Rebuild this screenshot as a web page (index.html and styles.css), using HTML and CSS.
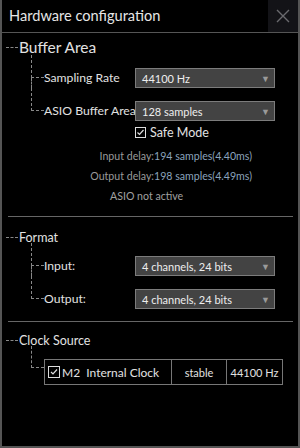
FILE: index.html
```html
<!DOCTYPE html>
<html lang="en">
<head>
    <meta charset="UTF-8">
    <title>Hardware configuration</title>
    <link rel="stylesheet" href="styles.css">
</head>
<body>
    <div class="window">
        <div class="titlebar">
            <span class="title">Hardware configuration</span>
            <span class="close">
                <svg width="14" height="14" viewBox="0 0 14 14"><path d="M1 1L13 13M13 1L1 13" stroke="#6a6a6e" stroke-width="1.4"/></svg>
            </span>
        </div>

        <div class="section first">
            <div class="head big"><span class="dash"></span>Buffer Area</div>
            <div class="tree">
                <div class="branch">
                    <span class="wire"></span>
                    <span class="label">Sampling Rate</span>
                    <div class="select">44100 Hz<span class="arrow">&#9660;</span></div>
                </div>
                <div class="branch">
                    <span class="wire"></span>
                    <span class="label">ASIO Buffer Area</span>
                    <div class="select">128 samples<span class="arrow">&#9660;</span></div>
                </div>
            </div>
            <div class="safe">
                <span class="check"><svg width="11" height="11" viewBox="0 0 11 11"><rect x="0.5" y="0.5" width="10" height="10" fill="none" stroke="#ddd"/><path d="M2.5 5.5L4.5 7.5L8.5 3" fill="none" stroke="#ddd" stroke-width="1.2"/></svg></span>
                Safe Mode
            </div>
            <div class="info">
                <div class="delay"><span class="key">Input delay:</span><span class="val">194 samples(4.40ms)</span></div>
                <div class="delay"><span class="key">Output delay:</span><span class="val">198 samples(4.49ms)</span></div>
                <div class="status">ASIO not active</div>
            </div>
        </div>

        <div class="section format">
            <div class="head"><span class="dash"></span>Format</div>
            <div class="tree">
                <div class="branch">
                    <span class="wire"></span>
                    <span class="label">Input:</span>
                    <div class="select">4 channels, 24 bits<span class="arrow">&#9660;</span></div>
                </div>
                <div class="branch">
                    <span class="wire"></span>
                    <span class="label">Output:</span>
                    <div class="select">4 channels, 24 bits<span class="arrow">&#9660;</span></div>
                </div>
            </div>
        </div>

        <div class="section last">
            <div class="head"><span class="dash"></span>Clock Source</div>
            <div class="tree">
                <div class="branch clock">
                    <span class="wire"></span>
                    <table class="clocks">
                        <tr>
                            <td class="name"><svg width="12" height="12" viewBox="0 0 12 12"><rect x="0.5" y="0.5" width="11" height="11" fill="none" stroke="#ddd"/><path d="M3 6L5 8L9 3.5" fill="none" stroke="#ddd" stroke-width="1.2"/></svg>M2&nbsp; Internal Clock</td>
                            <td class="state">stable</td>
                            <td class="rate">44100 Hz</td>
                        </tr>
                    </table>
                </div>
            </div>
        </div>
    </div>
</body>
</html>
```

FILE: styles.css
```css
body {
    margin: 0;
    background-color: #000;
    font-family: Lato, "Noto Sans", sans-serif;
    color: #e2e2e2;
}
.window {
    width: 300px;
    height: 448px;
    box-sizing: border-box;
    border: 2px solid #555;
    border-top: none;
    background-color: #000;
}
.titlebar {
    display: flex;
    height: 32px;
    border-bottom: 1px solid #555;
}
.title {
    flex: 1;
    padding-left: 7px;
    line-height: 32px;
    font-size: 14.6px;
    color: #e6e6e6;
}
.close {
    width: 30px;
    display: flex;
    align-items: center;
    justify-content: center;
    background-color: #131317;
}
.section {
    border-bottom: 1px solid #666;
    margin-left: 6px;
    margin-right: 5px;
}
.section.first {
    padding-bottom: 10px;
}
.section.format {
    padding-bottom: 12px;
}
.section.last {
    border-bottom: none;
}
.head {
    display: flex;
    align-items: center;
    height: 12px;
    margin-top: 14px;
    margin-left: -2px;
    font-size: 12.5px;
    white-space: nowrap;
}
.head.big {
    height: 16px;
    margin-top: 6px;
    font-size: 15.5px;
}
.last .head {
    margin-top: 12px;
}
.dash {
    width: 12px;
    border-top: 1px dashed #888;
    margin-right: 1px;
}
.tree {
    margin-left: 23px;
}
.branch {
    display: flex;
    align-items: flex-start;
    padding-top: 13px;
    position: relative;
}
.wire {
    width: 13px;
    height: 23px;
    margin-top: -13px;
    box-sizing: border-box;
    border-left: 1px dashed #888;
    border-bottom: 1px dashed #888;
    flex-shrink: 0;
}
.branch:not(:last-child)::after {
    content: "";
    position: absolute;
    left: 0;
    top: 23px;
    bottom: 0;
    border-left: 1px dashed #888;
}
.label {
    width: 91px;
    line-height: 20px;
    font-size: 12.2px;
    white-space: nowrap;
}
.select {
    width: 140px;
    height: 20px;
    box-sizing: border-box;
    display: flex;
    align-items: center;
    justify-content: space-between;
    padding: 0 4px 0 6px;
    background-color: #434343;
    border: 1px solid #7c7c7c;
    font-size: 11px;
    color: #eee;
}
.arrow {
    font-size: 9px;
    color: #9a9a9a;
}
.safe {
    display: flex;
    align-items: center;
    gap: 4px;
    margin: 4px 0 0 127px;
    height: 15px;
    font-size: 12.5px;
}
.check {
    display: flex;
}
.info {
    padding-top: 6px;
    font-size: 10.6px;
}
.delay {
    display: flex;
    height: 20px;
    align-items: center;
    justify-content: flex-end;
    padding-right: 41px;
}
.key {
    color: #9a9a9a;
}
.val {
    color: #8ba3bd;
}
.status {
    height: 20px;
    line-height: 20px;
    padding-left: 102px;
    color: #a0a0a0;
}
.clock .wire {
    height: 22px;
}
.clocks {
    border-collapse: collapse;
    font-size: 12px;
}
.clocks td {
    border: 1px solid #777;
    height: 24px;
    padding: 0;
}
.clocks .name {
    width: 127px;
    padding-left: 3px;
    box-sizing: border-box;
    white-space: nowrap;
}
.clocks .name svg {
    vertical-align: -1px;
    margin-right: 2px;
}
.clocks .state {
    width: 54px;
    text-align: center;
    font-size: 11px;
}
.clocks .rate {
    width: 55px;
    text-align: center;
    font-size: 11px;
}
```
